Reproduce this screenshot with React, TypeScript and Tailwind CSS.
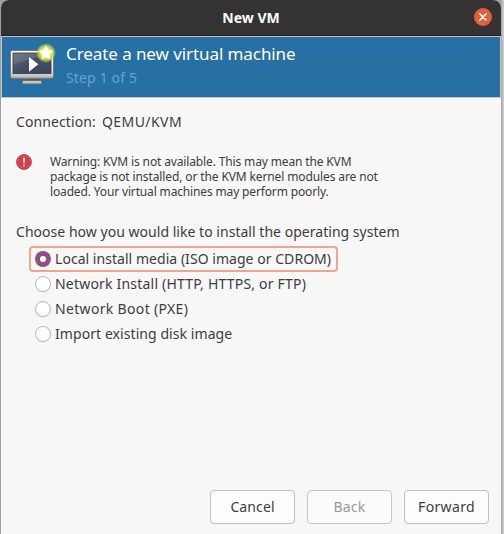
const options = [
  { label: 'Local install media (ISO image or CDROM)', tracking: 'tracking-[0.04px]', selected: true },
  { label: 'Network Install (HTTP, HTTPS, or FTP)', tracking: 'tracking-[0.2px]', selected: false },
  { label: 'Network Boot (PXE)', tracking: 'tracking-[0.33px]', selected: false },
  { label: 'Import existing disk image', tracking: 'tracking-[0.07px]', selected: false },
];

function TitleBar() {
  return (
    <header className="relative flex h-9 items-center justify-center rounded-t-[8px] border-b border-[#1f1d1e] bg-[#353233] text-white">
      <h1 className="text-[14px] leading-5 font-bold">New VM</h1>
      <button aria-label="Close" className="absolute top-[8px] right-[9px] flex h-[18px] w-[18px] items-center justify-center rounded-full bg-[#e0623a]">
        <svg width="8" height="8" viewBox="0 0 8 8" stroke="white" strokeWidth="1.5" strokeLinecap="round">
          <path d="M.8 .8L7.2 7.2M7.2 .8L.8 7.2" />
        </svg>
      </button>
    </header>
  );
}

function VmIcon() {
  return (
    <svg className="shrink-0" width="50" height="48" viewBox="0 0 50 48">
      <defs>
        <linearGradient id="bezel" x1="0" y1="0" x2="0" y2="1">
          <stop offset="0" stopColor="#ffffff" />
          <stop offset=".75" stopColor="#e4e4e2" />
          <stop offset="1" stopColor="#b2b2b0" />
        </linearGradient>
        <linearGradient id="screen" x1="0" y1="0" x2="1" y2="1">
          <stop offset="0" stopColor="#646e82" />
          <stop offset=".5" stopColor="#454d62" />
          <stop offset="1" stopColor="#3d465a" />
        </linearGradient>
        <radialGradient id="glow">
          <stop offset="0" stopColor="#f8f46a" />
          <stop offset=".55" stopColor="#dfe63c" />
          <stop offset=".8" stopColor="#c5d844" stopOpacity=".7" />
          <stop offset="1" stopColor="#a5c850" stopOpacity="0" />
        </radialGradient>
      </defs>
      <rect x="17" y="35" width="11" height="4" fill="#555753" />
      <rect x="12.5" y="37.5" width="19" height="3.5" rx="1" fill="#c8c8c6" stroke="#6b6d69" />
      <rect x=".5" y="7.5" width="43" height="27.8" rx="2" fill="url(#bezel)" stroke="#777976" />
      <rect x="3" y="10" width="38" height="20.5" fill="url(#screen)" stroke="#303644" strokeWidth=".8" />
      <path d="M3.4 10.4H40L3.4 21Z" fill="white" opacity=".1" />
      <path d="M19 14L28.3 21.3L19 28.7Z" fill="white" />
      <circle cx="36" cy="10" r="10" fill="url(#glow)" />
      <path d="M36 3L38.2 7.2L42.9 8L39.6 11.4L40.2 16L36 14L31.8 16L32.4 11.4L29.1 8L33.8 7.2Z" fill="white" stroke="white" strokeWidth=".5" strokeLinejoin="round" />
    </svg>
  );
}

function WarningIcon() {
  return (
    <svg className="mt-px shrink-0" width="16" height="16" viewBox="0 0 16 16">
      <circle cx="8" cy="8" r="7.4" fill="#d93a45" stroke="#a9404a" strokeWidth="1" />
      <circle cx="8" cy="8" r="6.4" fill="none" stroke="#e2555e" strokeWidth=".8" />
      <path d="M7 3.7H9L8.7 9.2H7.3Z" fill="#fbe9ea" />
      <rect x="7.1" y="10.6" width="1.8" height="1.8" rx=".6" fill="#fbe9ea" />
    </svg>
  );
}

function Radio({ selected }: { selected: boolean }) {
  return selected ? (
    <span className="flex h-4 w-4 items-center justify-center rounded-full bg-[#8a5285]">
      <span className="h-[6px] w-[6px] rounded-full bg-white" />
    </span>
  ) : (
    <span className="h-4 w-4 rounded-full border border-[#b9b6b3] bg-white shadow-[0_1px_1px_#0000000d]" />
  );
}

export default function App() {
  return (
    <div className="h-[534px] w-[504px] overflow-hidden bg-[linear-gradient(to_right,#a0a0a0_0,#a0a0a0_501px,#b5b5b5_502px,#d2d2d2_504px)] font-['Noto_Sans','Open_Sans',sans-serif] text-[#3d3d3d]">
      <div className="mr-[3px] ml-px flex h-full flex-col rounded-t-[8px] bg-[#f7f7f7]">
        <TitleBar />
        <div className="flex h-[62px] border border-[#c6c6c8] bg-[#2770a3] pl-2">
          <div className="pt-[6px]"><VmIcon /></div>
          <div className="pt-[4px] pl-[6px]">
            <h2 className="text-[17px] leading-[25px] tracking-[-0.08px] text-white">Create a new virtual machine</h2>
            <p className="text-[14px] leading-6 tracking-[0.15px] text-[#5fa5d8]">Step 1 of 5</p>
          </div>
        </div>

        <main className="flex-1 px-[15px] pt-[14px] text-[14px] leading-5">
          <p className="flex gap-[6px]">
            <span className="tracking-[0.1px]">Connection:</span>
            <span className="tracking-[0.45px]">QEMU/KVM</span>
          </p>
          <div className="mt-[21px] flex gap-[18px]">
            <WarningIcon />
            <div className="mt-px text-[12px] leading-[15px] whitespace-nowrap">
              <p className="tracking-[-0.14px]">Warning: KVM is not available. This may mean the KVM</p>
              <p className="tracking-[-0.12px]">package is not installed, or the KVM kernel modules are not</p>
              <p className="tracking-[-0.15px]">loaded. Your virtual machines may perform poorly.</p>
            </div>
          </div>
          <p className="mt-[23px] tracking-[0.03px]">Choose how you would like to install the operating system</p>
          <div className="mt-1 ml-[13px] flex flex-col items-start">
            {options.map((o) => (
              <label
                key={o.label}
                className={
                  o.selected
                    ? 'flex h-[26px] w-[309px] items-center gap-1 rounded-[4px] border-2 border-[#eea68c] pl-1'
                    : 'flex h-[25px] items-center gap-1 pb-px pl-[6px]'
                }
              >
                <Radio selected={o.selected} />
                <span className={o.tracking}>{o.label}</span>
              </label>
            ))}
          </div>
        </main>

        <footer className="mb-[10px] flex justify-end gap-3 pr-3 text-[14px] leading-5">
          <button className="h-[34px] w-[85px] rounded-[4px] border border-[#c2c0be] bg-[#fdfdfd] pb-px tracking-[0.1px]">Cancel</button>
          <button className="h-[34px] w-[85px] rounded-[4px] border border-[#c9c7c5] bg-[#fbfbfb] pb-px tracking-[0.2px] text-[#999]">Back</button>
          <button className="h-[34px] w-[85px] rounded-[4px] border border-[#c2c0be] bg-[#fdfdfd] pb-px tracking-[0.35px]">Forward</button>
        </footer>
      </div>
    </div>
  );
}
